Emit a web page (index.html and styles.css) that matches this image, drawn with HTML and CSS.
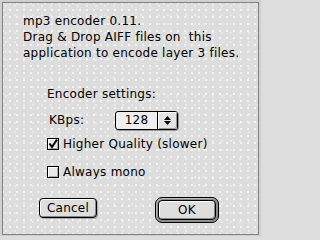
FILE: index.html
```html
<!DOCTYPE html>
<html>
<head>
<meta charset="utf-8">
<link rel="stylesheet" href="styles.css">
</head>
<body>
<div class="window">
  <div class="inner">
    <p class="msg">mp3 encoder 0.11.<br>Drag &amp; Drop AIFF files on&nbsp; this<br>application to encode layer 3 files.</p>
    <div class="settings">
      <div class="heading">Encoder settings:</div>
      <div class="row kbps">
        <span class="label">KBps:</span>
        <div class="popup">
          <span class="value">128</span>
          <span class="arrows">
            <svg width="9" height="11" viewBox="0 0 9 11"><path d="M4.5 1 L8 5 L1 5 Z M1 6 L8 6 L4.5 10 Z" fill="#000"/></svg>
          </span>
        </div>
      </div>
      <div class="row check">
        <span class="box">
          <svg width="12" height="12" viewBox="0 0 12 12"><path d="M2.5 5.5 L5 9 L10 1.5" fill="none" stroke="#000" stroke-width="2"/></svg>
        </span>
        <span class="clabel">Higher Quality (slower)</span>
      </div>
      <div class="row check second">
        <span class="box"></span>
        <span class="clabel">Always mono</span>
      </div>
    </div>
    <div class="buttons">
      <div class="btn">Cancel</div>
      <div class="ring"><div class="btn">OK</div></div>
    </div>
  </div>
</div>
</body>
</html>
```

FILE: styles.css
```css
html, body {
  margin: 0;
  padding: 0;
  background: #dddddd;
}
.window {
  width: 261px;
  height: 236px;
  box-sizing: border-box;
  border: 2px solid #d0d0d0;
  border-bottom-width: 1px;
  background-color: #dddddd;
  background-image:
    radial-gradient(circle at 1px 1px, #f4f4f4 0.7px, transparent 1px),
    radial-gradient(circle at 4px 4px, #eeeeee 0.6px, transparent 0.9px);
  background-size: 7px 7px, 9px 9px;
  font-family: "DejaVu Sans", Verdana, sans-serif;
  font-size: 12px;
  letter-spacing: 0.25px;
  color: #000;
}
.inner {
  height: 100%;
  box-sizing: border-box;
  border: 1px solid #808080;
  display: flex;
  flex-direction: column;
}
.msg {
  margin: 10px 0 0 20px;
  line-height: 16px;
  white-space: nowrap;
}
.settings {
  margin: 25px 0 0 44px;
  display: flex;
  flex-direction: column;
}
.heading {
  line-height: 16px;
}
.row {
  display: flex;
  align-items: center;
}
.kbps {
  margin-top: 8px;
  height: 20px;
}
.label {
  margin-left: 2px;
  width: 66px;
}
.popup {
  display: flex;
  width: 63px;
  height: 19px;
  box-sizing: border-box;
  border: 1px solid #000;
  border-radius: 3px;
  background: #eeeeee;
  box-shadow: 1px 1px 0 #999;
}
.value {
  width: 41px;
  border-right: 1px solid #000;
  text-align: center;
  line-height: 17px;
}
.arrows {
  flex: 1;
  display: flex;
  align-items: center;
  justify-content: center;
  background: #e4e4e4;
  box-shadow: inset 1px 1px 0 #fff, inset -1px -1px 0 #999;
  border-radius: 0 2px 2px 0;
}
.arrows svg { display: block; }
.check {
  height: 12px;
  margin-top: 8px;
}
.check.second {
  margin-top: 16px;
}
.box {
  flex: none;
  width: 12px;
  height: 12px;
  box-sizing: border-box;
  border: 1px solid #000;
  background: #e8e8e8;
  box-shadow: inset 1px 1px 0 #fff, inset -1px -1px 0 #aaa;
  position: relative;
}
.box svg {
  position: absolute;
  left: -1px;
  top: -1px;
}
.clabel {
  margin-left: 4px;
  white-space: nowrap;
}
.buttons {
  display: flex;
  align-items: flex-start;
  margin: 20px 0 0 36px;
}
.btn {
  width: 58px;
  height: 20px;
  box-sizing: border-box;
  border: 1px solid #000;
  border-radius: 4px;
  background: #dedede;
  box-shadow: inset 1px 1px 0 #fff, inset -1px -1px 0 #888, 1px 1px 0 #aaa;
  text-align: center;
  line-height: 18px;
}
.ring {
  margin: -1px 0 0 58px;
  padding: 2px;
  border: 1px solid #000;
  border-radius: 7px;
  background: #8c8c8c;
  box-shadow: inset 1px 1px 0 #bbb;
}
.ring .btn {
  box-shadow: inset 1px 1px 0 #fff, inset -1px -1px 0 #888;
}
```
